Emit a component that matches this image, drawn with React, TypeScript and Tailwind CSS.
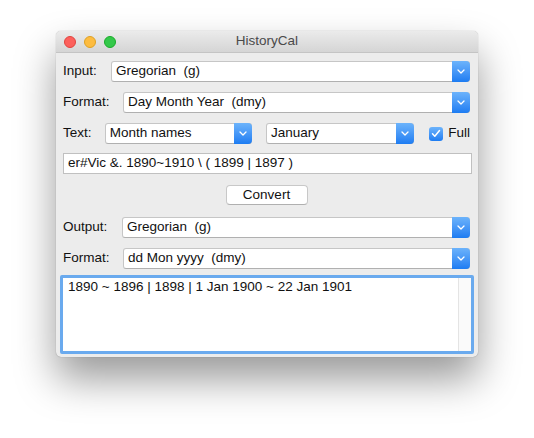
import React from "react"

function Chevron() {
  return (
    <svg width="8" height="5" viewBox="0 0 8 5" fill="none">
      <path d="M1 1l3 3 3-3" stroke="white" strokeWidth="1.3" strokeLinecap="round" strokeLinejoin="round" />
    </svg>
  )
}

function Select({ value, className = "" }: { value: string; className?: string }) {
  return (
    <div
      className={
        "flex h-[21px] items-stretch rounded-[3px] border border-[#c6c6c6] border-b-[#b0b0b0] bg-white " + className
      }
    >
      <div className="flex flex-1 items-center truncate pl-[4px] text-[13.5px] text-[#111] whitespace-pre">{value}</div>
      <div className="-my-px -mr-px flex w-[18px] items-center justify-center rounded-r-[4px] bg-gradient-to-b from-[#6cb3fb] to-[#1c7cf2]">
        <Chevron />
      </div>
    </div>
  )
}

function Row({ label, labelW, children }: { label: string; labelW: string; children: React.ReactNode }) {
  return (
    <div className="flex items-center">
      <span className={"text-[13.5px] text-[#111] " + labelW}>{label}</span>
      {children}
    </div>
  )
}

export default function App() {
  return (
    <div className="h-[438px] w-[534px] bg-white pt-[31px] pl-[56px]" style={{ fontFamily: '"Liberation Sans", Arial, sans-serif' }}>
      <div className="flex h-[326px] w-[422px] flex-col overflow-hidden rounded-[5px] bg-[#ececec] shadow-[0_22px_40px_rgba(0,0,0,0.4),0_0_1px_rgba(0,0,0,0.4)]">
        {/* title bar */}
        <div className="relative flex h-[22px] items-center justify-center border-b border-[#c4c4c4] bg-gradient-to-b from-[#ebebeb] to-[#d5d5d5]">
          <div className="absolute left-[8px] top-[5px] flex gap-[8px]">
            <span className="h-[12px] w-[12px] rounded-full border border-[#e0443e] bg-[#fc605c]" />
            <span className="h-[12px] w-[12px] rounded-full border border-[#dea123] bg-[#fdbc40]" />
            <span className="h-[12px] w-[12px] rounded-full border border-[#1aab29] bg-[#34c84a]" />
          </div>
          <span className="text-[13.5px] text-[#4a4a4a]">HistoryCal</span>
        </div>

        <div className="flex flex-col pl-[7px] pr-[8px]">
          <div className="mt-[8px]">
            <Row label="Input:" labelW="w-[48px]">
              <Select value="Gregorian  (g)" className="flex-1" />
            </Row>
          </div>
          <div className="mt-[10px]">
            <Row label="Format:" labelW="w-[60px]">
              <Select value="Day Month Year  (dmy)" className="flex-1" />
            </Row>
          </div>
          <div className="mt-[10px]">
            <Row label="Text:" labelW="w-[42px]">
              <Select value="Month names" className="w-[148px]" />
              <Select value="January" className="ml-[14px] w-[149px]" />
              <div className="ml-[15px] flex items-center gap-[5px]">
                <span className="flex h-[14px] w-[14px] items-center justify-center rounded-[3px] bg-gradient-to-b from-[#6cb3fb] to-[#1c7cf2]">
                  <svg width="10" height="9" viewBox="0 0 10 9" fill="none">
                    <path d="M1.5 4.8l2.3 2.4L8.5 1.5" stroke="white" strokeWidth="1.5" strokeLinecap="round" strokeLinejoin="round" />
                  </svg>
                </span>
                <span className="text-[13.5px] text-[#111]">Full</span>
              </div>
            </Row>
          </div>
          <div className="-mr-[2px] mt-[9px] flex h-[21px] items-center border border-[#c0c0c0] bg-white pl-[4px] text-[13.5px] text-[#111]">
            er#Vic &amp;. 1890~1910 \ ( 1899 | 1897 )
          </div>
          <div className="mt-[11px] flex justify-center">
            <button className="flex h-[20px] w-[82px] items-center justify-center rounded-[4px] border border-[#c8c8c8] border-b-[#b0b0b0] bg-white text-[13.5px] text-[#111]">
              Convert
            </button>
          </div>
          <div className="mt-[12px]">
            <Row label="Output:" labelW="w-[59px]">
              <Select value="Gregorian  (g)" className="flex-1" />
            </Row>
          </div>
          <div className="mt-[10px]">
            <Row label="Format:" labelW="w-[60px]">
              <Select value="dd Mon yyyy  (dmy)" className="flex-1" />
            </Row>
          </div>
        </div>

        <div className="mx-[4px] mt-[6px] flex h-[79px] rounded-[2px] border-[3px] border-[#6aaaee] bg-white">
          <div className="flex-1 pl-[5px] text-[13.5px] leading-[18px] text-[#111]">1890 ~ 1896 | 1898 | 1 Jan 1900 ~ 22 Jan 1901</div>
          <div className="w-[13px] border-l border-[#e4e4e4] bg-[#fafafa]" />
        </div>
      </div>
    </div>
  )
}
